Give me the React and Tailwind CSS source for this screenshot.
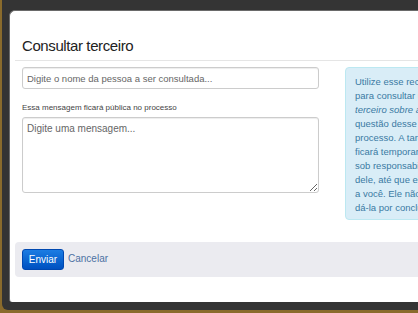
export default function App() {
  return (
    <div className="w-[418px] h-[313px] bg-[#8a6b2c] pl-[2px] pb-[3px] flex overflow-hidden font-['Liberation_Sans',Arial,sans-serif]">
      <div className="flex-1 flex bg-[#343434] pt-[10px] pl-[7px] pb-[8px] rounded-bl-[6px]">
        <div className="flex-1 flex flex-col bg-white rounded-tl-[6px] rounded-bl-[3px] border-t border-l border-[#6a6a6a] pl-[5px]">
          <div className="h-[50px] flex items-end pl-[7px] pb-[5px] border-b border-[#e5e5e5]">
            <h4 className="text-[15px] leading-[18px] tracking-[-0.4px] text-[#222]">Consultar terceiro</h4>
          </div>
          <div className="flex pt-[6px]">
            <div className="w-[297px] ml-[7px] shrink-0 flex flex-col">
              <input
                className="h-[22px] w-full border border-[#ccc] rounded-[3px] px-[4px] text-[9.5px] text-[#555] placeholder:text-[#666] shadow-[inset_0_1px_1px_rgba(0,0,0,0.075)] outline-none"
                placeholder="Digite o nome da pessoa a ser consultada..."
              />
              <label className="mt-[14px] mb-[4px] text-[8px] leading-[10px] text-[#444]">
                Essa mensagem ficará pública no processo
              </label>
              <textarea
                className="h-[76px] w-full border border-[#ccc] rounded-[3px] px-[4px] pt-[4px] text-[10px] leading-[14px] text-[#555] placeholder:text-[#666] shadow-[inset_0_1px_1px_rgba(0,0,0,0.075)] outline-none"
                placeholder="Digite uma mensagem..."
              />
            </div>
            <div className="ml-[26px] w-[120px] shrink-0 h-[153px] bg-[#d9edf7] border border-[#bce8f1] rounded-[4px] pl-[9px] pt-[7px] text-[9.5px] leading-[14px] text-[#3a7aa3] whitespace-nowrap">
              <div>Utilize esse recurso</div>
              <div>para consultar um</div>
              <div className="italic">terceiro sobre alguma</div>
              <div>questão desse</div>
              <div>processo. A tarefa</div>
              <div>ficará temporariamente</div>
              <div>sob responsabilidade</div>
              <div>dele, até que ele a devolva</div>
              <div>a você. Ele não poderá</div>
              <div>dá-la por concluída.</div>
            </div>
          </div>
          <div className="mt-[22px] h-[35px] bg-[#ebebf0] rounded-[4px] flex items-center pl-[7px]">
            <button className="h-[21px] w-[42px] rounded-[3px] bg-gradient-to-b from-[#1c7de3] to-[#0050c0] border border-[#0048b0] text-white text-[10px] leading-none">
              Enviar
            </button>
            <span className="ml-[4px] text-[10px] text-[#4d72a3] -mt-[3px]">Cancelar</span>
          </div>
        </div>
      </div>
    </div>
  );
}
